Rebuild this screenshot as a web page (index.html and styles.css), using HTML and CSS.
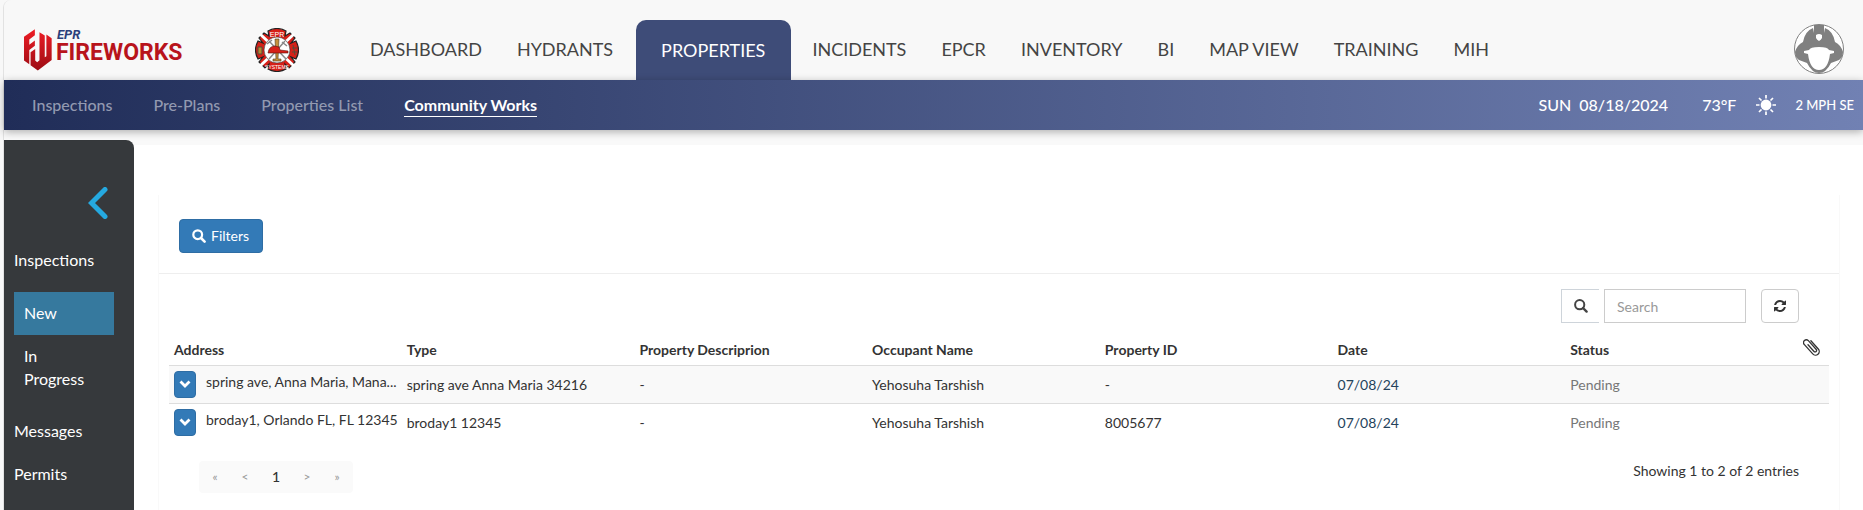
FILE: index.html
```html
<!DOCTYPE html>
<html lang="en">
<head>
<meta charset="utf-8">
<title>Community Works</title>
<link rel="stylesheet" href="styles.css">
</head>
<body>
<div class="app">
  <header class="header">
    <a class="brand" href="#" aria-label="EPR Fireworks">
      <svg class="brand-mark" viewBox="43 27 85 126" aria-hidden="true">
        <defs><linearGradient id="red" gradientUnits="userSpaceOnUse" x1="0" y1="27" x2="0" y2="153"><stop offset="0" stop-color="#ee1c25"/><stop offset="1" stop-color="#9c0d14"/></linearGradient></defs>
        <path fill="url(#red)" d="M43 50L76 27V45L59 58V74L76 61V77L59 90V133L43 122Z"/>
        <path fill="url(#red)" d="M63 97L77 87V122L83 127L90 121V36L106 46V112L111 109V43L127 54V120L85 152L63 136Z"/>
      </svg>
      <span class="brand-text"><span class="brand-top">EPR</span><span class="brand-name">FIREWORKS</span></span>
    </a>
    <svg class="badge" viewBox="0 0 44 44" role="img" aria-label="EPR Systems">
      <path d="M13 3Q22-2 31 3L30 8L35 5L40 10L36 15L41 13Q46 22 41 31L36 29L40 34L34 40L30 36L31 41Q22 46 13 41L14 36L10 40L4 34L8 29L3 31Q-2 22 3 13L8 15L4 10L9 5L14 8Z" fill="#d62018" stroke="#222" stroke-width="1.200"/>
      <path d="M5 6L39 38M39 6L5 38" stroke="#fff" stroke-width="3"/>
      <circle cx="22" cy="22" r="13" fill="#fff" stroke="#333" stroke-width=".6"/>
      <path d="M14 13L31 31M30 13L14 31M12 16L17 12M27 14L32 18" stroke="#888" stroke-width="1.500"/>
      <path d="M20 11H24L23 31H26V33H18V31H21Z" fill="#c6903c" stroke="#4b3518" stroke-width=".6"/>
      <path d="M13 25Q14 18 20 18L24 19L25 22L33 23V25Z" fill="#d62018" stroke="#59100c" stroke-width=".6"/>
      <path d="M3 19H7V26H3ZM38 17L40 27M37 20H42M37 24H42" fill="#b68d35" stroke="#574b3a"/>
      <text x="22" y="8.500" class="badge-text">EPR</text>
      <text x="22" y="41" class="badge-text badge-small">SYSTEMS</text>
    </svg>
    <nav class="main-nav" aria-label="Main">
      <a href="#">DASHBOARD</a>
      <a href="#">HYDRANTS</a>
      <a href="#" class="active" aria-current="page">PROPERTIES</a>
      <a href="#">INCIDENTS</a>
      <a href="#">EPCR</a>
      <a href="#">INVENTORY</a>
      <a href="#">BI</a>
      <a href="#">MAP VIEW</a>
      <a href="#">TRAINING</a>
      <a href="#">MIH</a>
    </nav>
    <button class="avatar" type="button" aria-label="User profile">
      <svg viewBox="0 0 50 50" aria-hidden="true">
        <circle cx="25" cy="25" r="24.500" fill="#fff" stroke="#808080"/>
        <path fill="#808080" fill-rule="evenodd" d="M20 1H30V9L31 4Q39 7 41 18Q47 21 49 28Q49 33 45 36L37 39Q32 49 25 49Q18 49 13 39L5 36Q1 33 1 28Q3 21 9 18Q11 7 19 4L20 9ZM22 11V14Q23 16 25 17Q27 16 28 14V11Q25 9 22 11ZM15 26L10 27V29L14 30Q16 46 25 46Q34 46 36 30L40 29V27L35 26Q34 23 25 23Q16 23 15 26Z"/>
      </svg>
    </button>
  </header>

  <div class="subbar">
    <nav class="sub-nav" aria-label="Properties">
      <a href="#">Inspections</a>
      <a href="#">Pre-Plans</a>
      <a href="#">Properties List</a>
      <a href="#" class="active" aria-current="page">Community Works</a>
    </nav>
    <div class="weather">
      <span>SUN</span>
      <span class="date">08/18/2024</span>
      <span class="temp">73°F</span>
      <svg class="sun" viewBox="0 0 20 20" aria-hidden="true"><circle cx="10" cy="10" r="5.400" fill="#fff"/><path d="M10 0V3.500M10 16.500V20M0 10H3.500M16.500 10H20M3 3L5.500 5.500M14.500 14.500L17 17M3 17L5.500 14.500M14.500 5.500L17 3" stroke="#fff" stroke-width="1.700"/></svg>
      <span class="wind">2 MPH SE</span>
    </div>
  </div>

  <div class="body">
    <aside class="sidebar">
      <button class="collapse" type="button" aria-label="Collapse menu">
        <svg viewBox="0 0 20 32" aria-hidden="true"><path d="M17 2.500L3.500 16L17 29.500" fill="none" stroke="#25a9e0" stroke-width="5" stroke-linecap="round"/></svg>
      </button>
      <nav class="side-nav" aria-label="Community works">
        <a href="#">Inspections</a>
        <div class="side-group">
          <a href="#" class="active" aria-current="page">New</a>
          <a href="#">In Progress</a>
        </div>
        <a href="#">Messages</a>
        <a href="#">Permits</a>
      </nav>
    </aside>

    <main class="main">
      <section class="panel">
        <div class="filters">
          <button class="btn-primary" type="button">
            <svg class="icon" viewBox="0 0 14 14" aria-hidden="true"><circle cx="5.700" cy="5.700" r="4.400" fill="none" stroke="currentColor" stroke-width="2.200"/><path d="M9 9L12.600 12.600" stroke="currentColor" stroke-width="2.600" stroke-linecap="round"/></svg>
            Filters
          </button>
        </div>
        <div class="tools">
          <label class="search-icon" for="search" aria-label="Search">
            <svg class="icon" viewBox="0 0 14 14" aria-hidden="true"><circle cx="5.700" cy="5.700" r="4.600" fill="none" stroke="currentColor" stroke-width="2"/><path d="M9 9L12.600 12.600" stroke="currentColor" stroke-width="2.400" stroke-linecap="round"/></svg>
          </label>
          <input class="search" id="search" type="text" placeholder="Search">
          <button class="refresh" type="button" aria-label="Refresh">
            <svg viewBox="0 0 1536 1536" aria-hidden="true"><path fill="currentColor" d="M1511 928q0 5-1 7-64 268-268 434.500T764 1536q-146 0-282.500-55T238 1324l-129 129q-19 19-45 19t-45-19-19-45V960q0-26 19-45t45-19h448q26 0 45 19t19 45-19 45l-137 137q71 66 161 102t187 36q134 0 250-65t186-179q11-17 53-117 8-23 30-23h192q13 0 22.500 9.500t9.500 22.500zm25-800v448q0 26-19 45t-45 19h-448q-26 0-45-19t-19-45 19-45l138-138Q969 256 768 256q-134 0-250 65T332 500q-11 17-53 117-8 23-30 23H50q-13 0-22.500-9.500T18 608v-7q65-268 270-434.500T768 0q146 0 284 55.500T1297 212l130-129q19-19 45-19t45 19 19 45z"/></svg>
          </button>
        </div>
        <table class="grid">
          <thead>
            <tr>
              <th scope="col">Address</th><th scope="col">Type</th><th scope="col">Property Descriprion</th><th scope="col">Occupant Name</th><th scope="col">Property ID</th><th scope="col">Date</th><th scope="col">Status</th>
              <th scope="col" class="clip" aria-label="Attachments"><svg viewBox="-8.500 -9 17 18" aria-hidden="true"><path transform="rotate(-42)" d="M3.700-5V6a3.700 3.700 0 0 1-7.400 0V-6.800a2.800 2.800 0 0 1 5.600 0V5a1.500 1.500 0 0 1-3 0V-4" fill="none" stroke="#333" stroke-width="1.300" stroke-linecap="round"/></svg></th>
            </tr>
          </thead>
          <tbody>
            <tr>
              <td class="address-cell"><div class="address"><button class="expand" type="button" aria-label="Expand row"><svg viewBox="0 0 12 8" aria-hidden="true"><path d="M1.500 1.500L6 6L10.500 1.500" fill="none" stroke="#fff" stroke-width="2.800"/></svg></button><span>spring ave, Anna Maria, Mana...</span></div></td>
              <td>spring ave Anna Maria 34216</td><td>-</td><td>Yehosuha Tarshish</td><td>-</td><td class="date-cell">07/08/24</td><td class="status">Pending</td><td></td>
            </tr>
            <tr>
              <td class="address-cell"><div class="address"><button class="expand" type="button" aria-label="Expand row"><svg viewBox="0 0 12 8" aria-hidden="true"><path d="M1.500 1.500L6 6L10.500 1.500" fill="none" stroke="#fff" stroke-width="2.800"/></svg></button><span>broday1, Orlando FL, FL 12345</span></div></td>
              <td>broday1 12345</td><td>-</td><td>Yehosuha Tarshish</td><td>8005677</td><td class="date-cell">07/08/24</td><td class="status">Pending</td><td></td>
            </tr>
          </tbody>
        </table>
        <footer class="foot">
          <nav class="pager" aria-label="Pages">
            <button type="button" aria-label="First page">«</button>
            <button type="button" aria-label="Previous page">&lt;</button>
            <button type="button" class="current" aria-current="page">1</button>
            <button type="button" aria-label="Next page">&gt;</button>
            <button type="button" aria-label="Last page">»</button>
          </nav>
          <p class="summary">Showing 1 to 2 of 2 entries</p>
        </footer>
      </section>
    </main>
  </div>
</div>
</body>
</html>
```

FILE: styles.css
```css
*, *::before, *::after { box-sizing: border-box; }
html { height: 100%; }
body {
  margin: 0;
  height: 100%;
  background: #f8f8f8;
  color: #333;
  font: 14px/20px Lato, "Liberation Sans", sans-serif;
}
a { color: inherit; text-decoration: none; }
button { margin: 0; padding: 0; border: 0; background: none; color: inherit; font: inherit; cursor: pointer; }
svg { display: block; }

.app {
  display: flex;
  flex-direction: column;
  min-height: 100%;
  margin-left: 3px;
  border-left: 1px solid #e2e2e2;
  border-top-left-radius: 8px;
  background: #f9f9f9;
}

.header { display: flex; align-items: flex-end; height: 80px; background: #f8f8f8; border-top-left-radius: 8px; }
.brand { display: flex; gap: 4px; width: 232px; margin-bottom: 9px; padding-left: 20px; }
.brand-mark { width: 28px; height: 42px; }
.brand-text { display: flex; flex-direction: column; }
.brand-top { padding-left: 1px; color: #2b3f7b; font: italic 700 13px/12px Roboto, sans-serif; }
.brand-name { color: #b8141c; font: 700 23px/24px Roboto, sans-serif; }
.badge { width: 44px; height: 44px; margin: 0 0 8px 19px; flex: none; }
.badge-text { fill: #fff; font: 400 7px "Liberation Sans", sans-serif; text-anchor: middle; }
.badge-small { font-size: 5px; }

.main-nav { display: flex; gap: 1px; flex: 1; margin-left: 54px; color: #444; font-size: 18px; line-height: 20px; white-space: nowrap; }
.main-nav a { padding: 19px 17px 21px; }
.main-nav .active {
  margin: 0 3px 0 5px;
  padding: 20px 26px 20px 25px;
  border-radius: 10px 10px 0 0;
  background: #3e4c78;
  color: #fff;
}
.avatar { width: 50px; height: 50px; margin: 0 19px 6px; }

.subbar {
  z-index: 1;
  display: flex;
  justify-content: space-between;
  align-items: center;
  height: 50px;
  padding: 0 9px 0 28px;
  background: linear-gradient(to right, #202d58, #7181b3);
  box-shadow: 0 2px 8px rgba(0, 0, 0, .3);
  color: #fff;
  font-size: 16px;
  white-space: nowrap;
}
.sub-nav { display: flex; align-items: center; gap: 41px; font-weight: 500; }
.sub-nav a { color: #9299b0; }
.sub-nav .active { padding: 1px 0; border-bottom: 1px solid #fff; color: #fff; font-weight: 700; }
.weather { display: flex; align-items: center; font-weight: 500; }
.date { margin-left: 8px; }
.temp { margin-left: 34px; }
.sun { width: 20px; height: 20px; margin: 0 19px 0 20px; }
.wind { font-size: 13px; }

.body { display: flex; flex: 1; }
.sidebar {
  width: 130px;
  flex: none;
  margin-top: 10px;
  padding: 47px 20px 0 10px;
  border-top-right-radius: 8px;
  background: #36393c;
  color: #fff;
  font-size: 16px;
  line-height: 23px;
}
.collapse { display: block; width: 20px; height: 32px; margin: 0 6px 0 auto; }
.side-nav { display: flex; flex-direction: column; gap: 20px; padding-top: 29px; }
.side-group { display: flex; flex-direction: column; padding-top: 1px; }
.side-group a { padding: 9px 30px 9px 10px; }
.side-group .active { padding-bottom: 11px; background: #36799e; }

.main { flex: 1; min-width: 0; margin-top: 15px; padding: 50px 23px 0 24px; background: #fff; }
.panel { height: 100%; border: solid #f9f9f9; border-width: 0 1px; }
.filters { padding: 24px 20px 20px; border-bottom: 1px solid #eee; }
.btn-primary {
  display: flex;
  align-items: center;
  gap: 5px;
  height: 34px;
  padding: 0 13px 0 12px;
  border: 1px solid #2e6da4;
  border-radius: 4px;
  background: #337ab7;
  color: #fff;
}
.icon { width: 14px; height: 14px; }
.tools { display: flex; justify-content: flex-end; padding: 15px 40px 0 0; }
.search-icon { display: grid; place-items: center; width: 38px; height: 34px; border: 1px solid #ced4da; border-right: 0; color: #444; }
.search { width: 142px; height: 34px; margin: 0 15px 0 5px; padding: 0 12px; border: 1px solid #ccc; background: #fff; color: #555; font: inherit; }
.search::placeholder { color: #999; opacity: 1; }
.refresh { display: grid; place-items: center; width: 38px; height: 34px; border: 1px solid #ccc; border-radius: 4px; }
.refresh svg { width: 12px; height: 12px; }

.grid { width: calc(100% - 20px); margin: 11px 10px 0; border-collapse: collapse; table-layout: fixed; }
.grid th { height: 31px; padding: 2px 5px 0; font-weight: 700; text-align: left; }
.grid td { height: 38px; padding: 2px 5px 0; border-top: 1px solid #ddd; }
.grid tbody tr:first-child { background: #f9f9f9; }
.grid .clip { width: 31px; padding: 0 9px 4px 5px; }
.clip svg { width: 17px; height: 18px; }
.grid .address-cell { padding: 0 0 0 5px; }
.address { display: flex; align-items: center; gap: 10px; }
.address span { min-width: 0; padding-bottom: 4px; overflow: hidden; text-overflow: ellipsis; white-space: nowrap; }
.expand { display: grid; place-items: center; flex: none; width: 22px; height: 27px; border: 1px solid #2e6da4; border-radius: 4px; background: #337ab7; }
.expand svg { width: 12px; height: 8px; }
.grid .date-cell { color: #24435c; }
.grid .status { color: #777; }

.foot { display: flex; justify-content: space-between; align-items: flex-start; padding: 20px 40px 0; }
.pager { display: flex; height: 32px; padding: 0 1px; border-radius: 4px; background: #fafafa; color: #999; font-size: 12px; }
.pager button { width: 30px; }
.pager .current { width: 32px; color: #333; font-size: 14px; font-weight: 500; }
.summary { margin: 0; }
```
